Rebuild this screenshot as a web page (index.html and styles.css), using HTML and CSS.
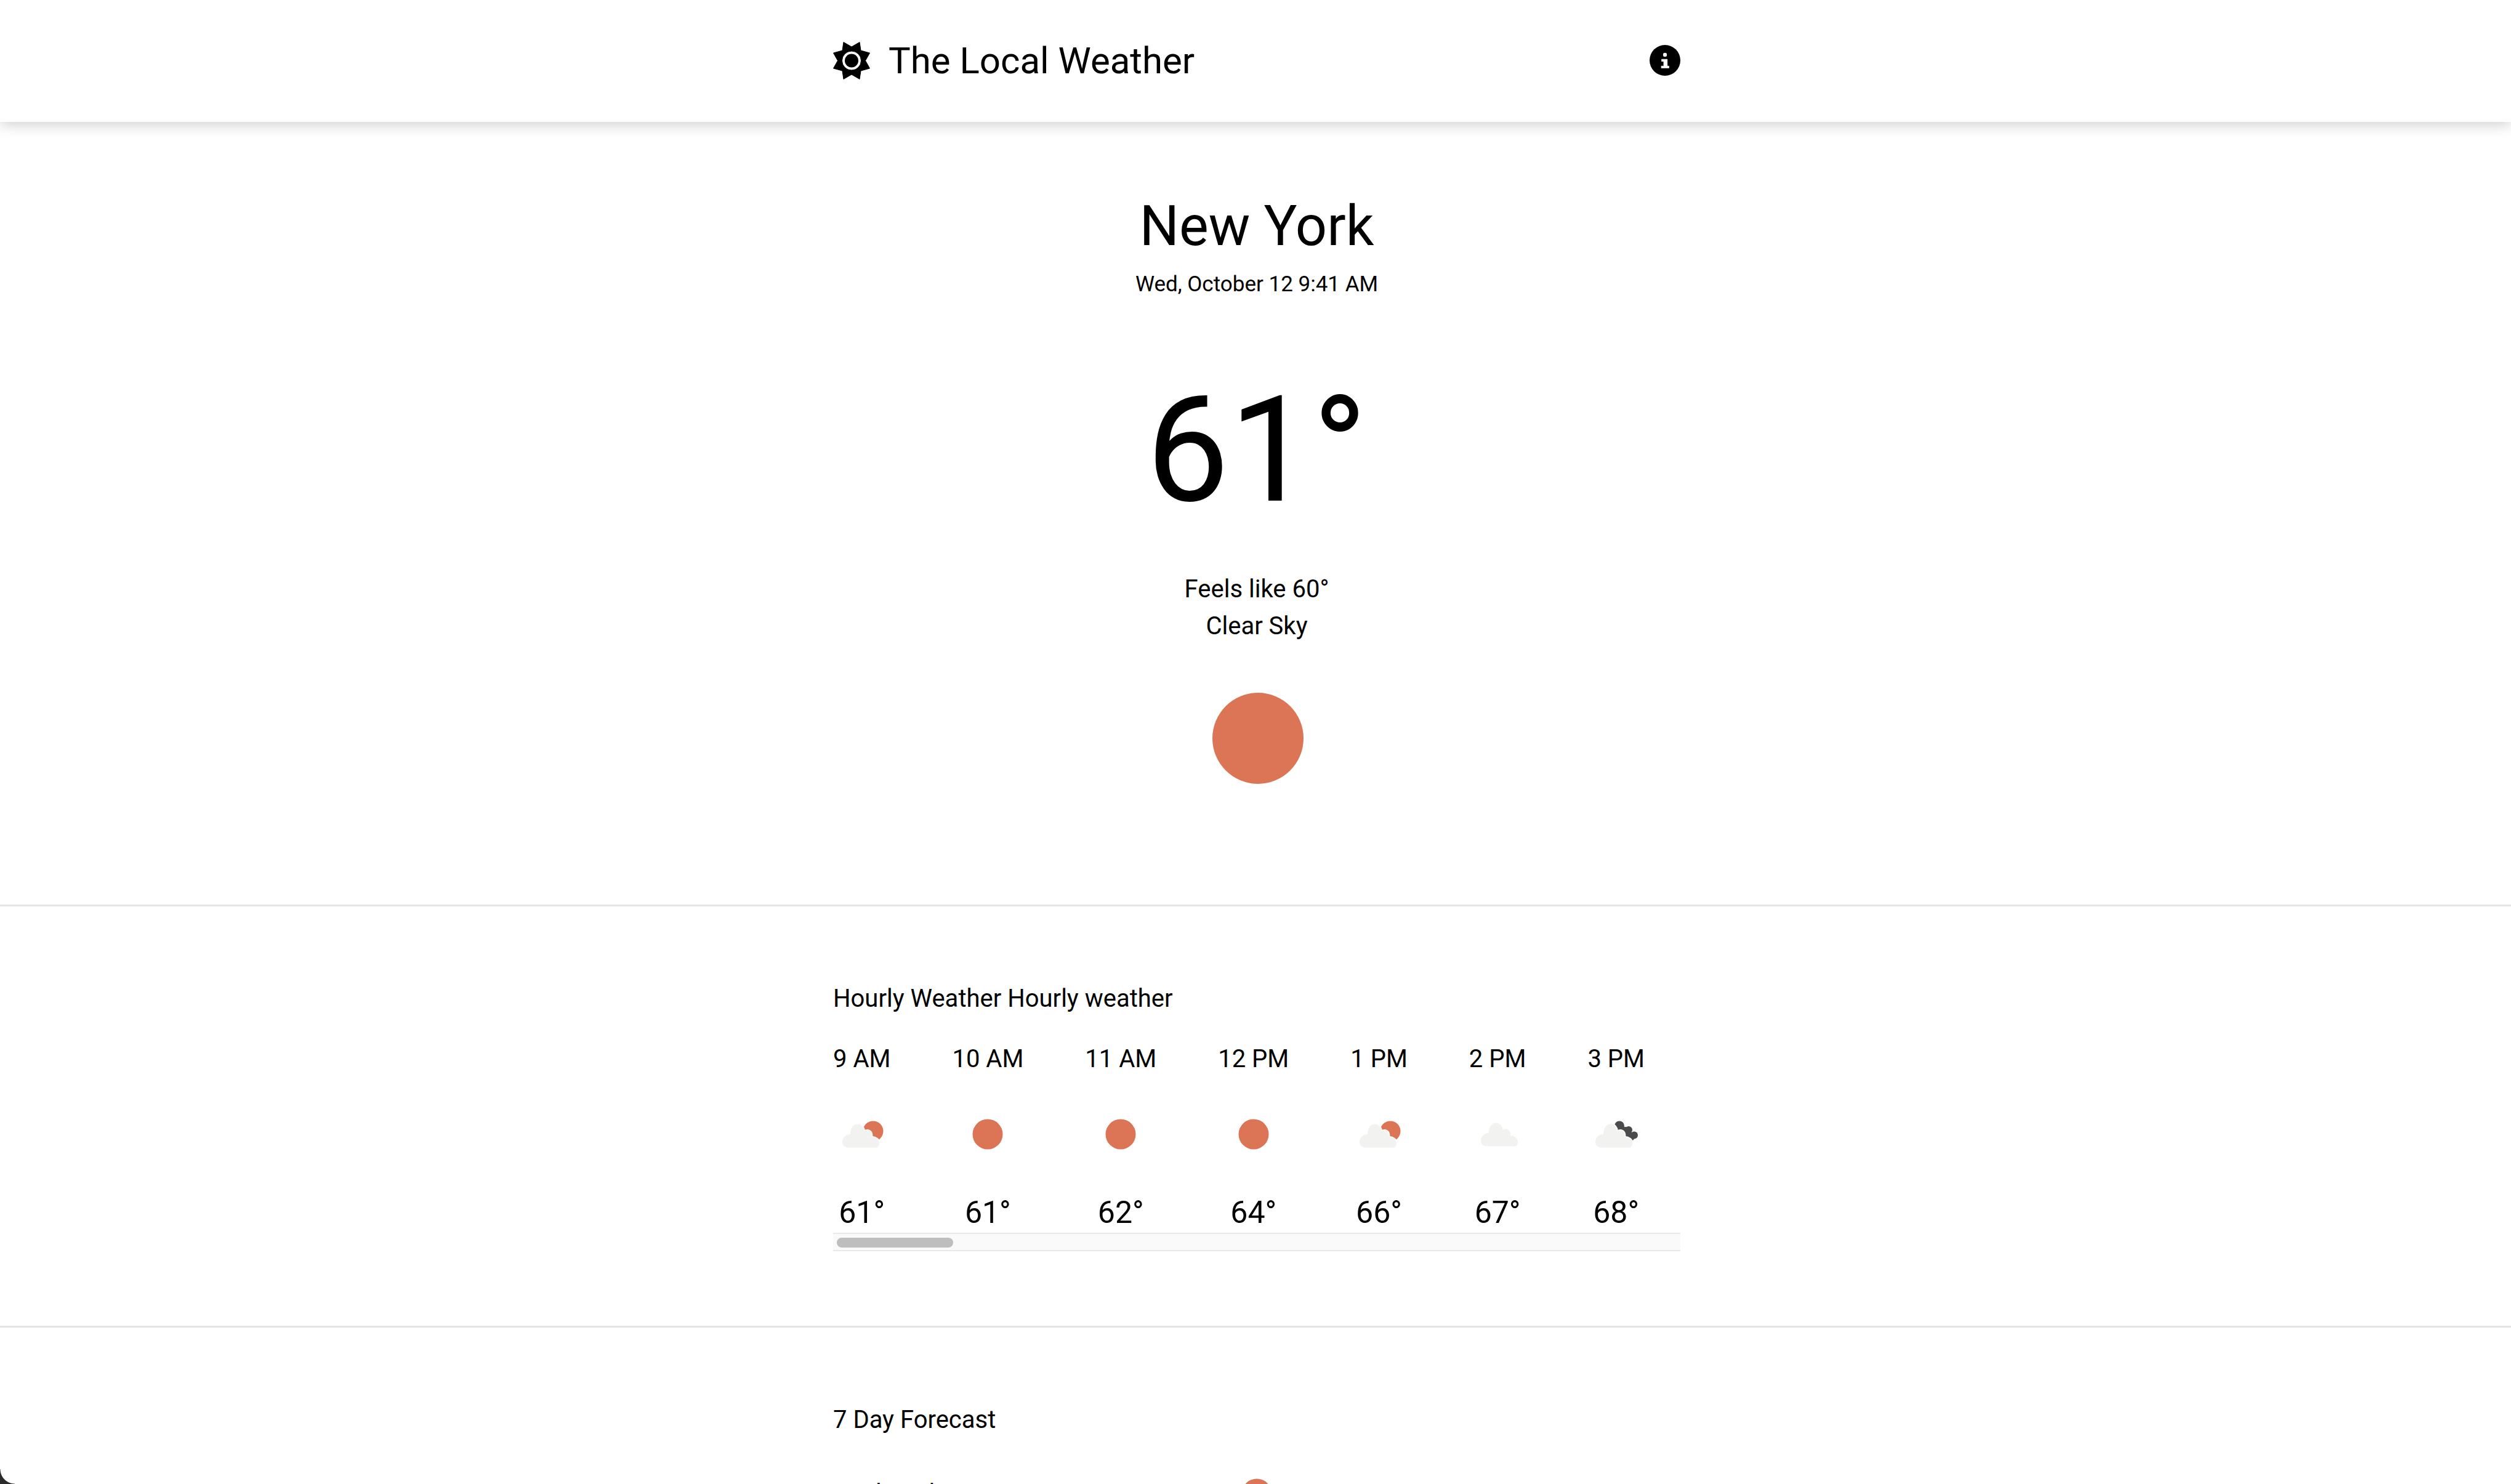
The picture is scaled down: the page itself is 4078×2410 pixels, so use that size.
FILE: index.html
```html
<!DOCTYPE html>
<html>
<head>
<meta name="viewport" content="width=device-width, initial-scale=1">
<title>The Local Weather</title>
<link rel="stylesheet" href="styles.css">
</head>
<body>

<header class="top-bar">
  <div class="wrap top-bar-inner">
    <div class="brand">
      <svg class="brand-icon" viewBox="0 0 60 61">
        <path fill-rule="evenodd" fill="#000" stroke="#000" stroke-linejoin="round" d="M17 .5 L30 8 L43 .5 L45 14 L59.5 18 L52.5 30.5 L59.5 43 L45 47 L43 60.5 L30 53 L17 60.5 L15 47 L.5 43 L7.5 30.5 L.5 18 L15 14 Z M30 15 A15.5 15.5 0 1 0 30 46 A15.5 15.5 0 1 0 30 15 Z"/>
        <circle cx="30" cy="30.5" r="11" fill="#000"/>
      </svg>
      <span class="brand-name">The Local Weather</span>
    </div>
    <svg class="info-icon" viewBox="0 0 50 50">
      <circle cx="25" cy="25" r="25" fill="#000"/>
      <circle cx="25" cy="16" r="3.2" fill="#fff"/>
      <path fill="#fff" stroke="#fff" stroke-width=".6" stroke-linejoin="round" d="M19.5 23.2 H28.8 V34.2 H31.5 V37.5 H19 V34.2 H22.9 V26.8 H19.5 Z"/>
    </svg>
  </div>
</header>

<section class="current">
  <h1 class="city">New York</h1>
  <p class="date">Wed, October 12 9:41 AM</p>
  <p class="temp-now">61°</p>
  <p class="summary">Feels like 60°<br>Clear Sky</p>
  <svg class="sun-big" viewBox="0 0 100 100"><circle cx="50" cy="50" r="50" fill="#dc7555"/></svg>
</section>

<section class="band">
  <div class="wrap">
    <h2 class="band-title">Hourly Weather Hourly weather</h2>
    <div class="hours">
      <div class="hour"><span class="hour-time">9 AM</span>
        <svg class="wx" viewBox="0 0 72 72"><use href="#partly"/></svg>
        <span class="hour-temp">61°</span></div>
      <div class="hour"><span class="hour-time">10 AM</span>
        <svg class="wx" viewBox="0 0 72 72"><use href="#clear"/></svg>
        <span class="hour-temp">61°</span></div>
      <div class="hour"><span class="hour-time">11 AM</span>
        <svg class="wx" viewBox="0 0 72 72"><use href="#clear"/></svg>
        <span class="hour-temp">62°</span></div>
      <div class="hour"><span class="hour-time">12 PM</span>
        <svg class="wx" viewBox="0 0 72 72"><use href="#clear"/></svg>
        <span class="hour-temp">64°</span></div>
      <div class="hour"><span class="hour-time">1 PM</span>
        <svg class="wx" viewBox="0 0 72 72"><use href="#partly"/></svg>
        <span class="hour-temp">66°</span></div>
      <div class="hour"><span class="hour-time">2 PM</span>
        <svg class="wx" viewBox="0 0 72 72"><use href="#cloud"/></svg>
        <span class="hour-temp">67°</span></div>
      <div class="hour"><span class="hour-time">3 PM</span>
        <svg class="wx" viewBox="0 0 72 72"><use href="#overcast"/></svg>
        <span class="hour-temp">68°</span></div>
    </div>
    <div class="scroll-track"><div class="scroll-thumb"></div></div>
  </div>
</section>

<section class="band band-last">
  <div class="wrap">
    <h2 class="band-title">7 Day Forecast</h2>
    <div class="day">
      <span class="day-name">Wednesday</span>
      <svg class="wx-day" viewBox="0 0 72 72"><use href="#clear"/></svg>
    </div>
  </div>
</section>

<div class="corner"></div>

<svg class="defs" width="0" height="0">
  <defs>
    <g id="clear"><circle cx="36" cy="36" r="24.5" fill="#dc7555"/></g>
    <path id="cloud-shape" d="M7 38 A9 9 0 0 1 0 29 A12.5 12.5 0 0 1 13 16.5 C13 6 18 0 25 0 C31 0 35 5 36 12 C38 9 44 9 47 14 C48 16 48 18 48 21 C54 21 60 25 60 31 C60 34 59 36 57 38 Z"/>
    <g id="partly">
      <circle cx="54" cy="31" r="16.5" fill="#dc7555"/>
      <use href="#cloud-shape" transform="translate(4 19.5)" fill="#fff" stroke="#fff" stroke-width="3"/>
      <use href="#cloud-shape" transform="translate(4 19.5)" fill="#f2f2f0"/>
    </g>
    <g id="cloud"><use href="#cloud-shape" transform="translate(9 17.5)" fill="#f2f2f0"/></g>
    <g id="overcast" fill="#4b4b4d">
      <circle cx="41" cy="22.5" r="8"/>
      <circle cx="56" cy="29" r="6"/>
      <circle cx="65" cy="37.5" r="6"/>
      <circle cx="50" cy="35" r="11"/>
      <circle cx="60" cy="41" r="5.5"/>
      <use href="#cloud-shape" transform="translate(2 19.5)" fill="#fff" stroke="#fff" stroke-width="3"/>
      <use href="#cloud-shape" transform="translate(2 19.5)" fill="#f2f2f0"/>
    </g>
  </defs>
</svg>

</body>
</html>
```

FILE: styles.css
```css
* {
  box-sizing: border-box;
}

html, body {
  height: 2410px;
  margin: 0;
  overflow: hidden;
  background: #fff;
}

body {
  position: relative;
  font-family: Roboto, "Liberation Sans", sans-serif;
  color: #000;
}

.wrap {
  width: 1376px;
  margin-left: 1353px;
}

/* top bar */
.top-bar {
  height: 198px;
  background: #fff;
  box-shadow: 0 4px 22px rgba(0, 0, 0, 0.2);
  position: relative;
}

.top-bar-inner {
  height: 100%;
  padding-bottom: 2px;
  display: flex;
  align-items: center;
  justify-content: space-between;
}

.brand {
  display: flex;
  align-items: center;
  gap: 30px;
}

.brand-icon {
  width: 60px;
  height: 61px;
}

.brand-name {
  font-size: 60px;
}

.info-icon {
  width: 50px;
  height: 50px;
}

/* current conditions */
.current {
  height: 1271px;
  padding-top: 115px;
  padding-left: 4px;
  display: flex;
  flex-direction: column;
  align-items: center;
}

.city {
  margin: 0;
  font-size: 90px;
  font-weight: 400;
  line-height: 110px;
}

.date {
  margin: 18px 0 0;
  font-size: 35px;
  line-height: 42px;
}

.temp-now {
  margin: 101px 0 0;
  font-size: 240px;
  font-weight: 400;
  line-height: 294px;
}

.summary {
  margin: 49px 0 0;
  font-size: 40px;
  line-height: 60px;
  text-align: center;
}

.sun-big {
  width: 148px;
  height: 148px;
  margin-top: 78px;
  margin-left: 3px;
}

/* hourly + daily bands */
.band {
  border-top: 3px solid #e4e4e4;
  height: 684px;
  padding-top: 126px;
}

.band-last {
  height: 257px;
  overflow: hidden;
}

.band-title {
  margin: 0;
  font-size: 40px;
  font-weight: 400;
  line-height: 48px;
}

.hours {
  display: flex;
  gap: 100px;
  margin-top: 50px;
}

.hour {
  display: flex;
  flex-direction: column;
  align-items: center;
}

.hour-time {
  font-size: 40px;
  line-height: 48px;
}

.wx {
  width: 72px;
  height: 72px;
  margin-top: 62px;
}

.hour-temp {
  margin-top: 61px;
  font-size: 50px;
  line-height: 60px;
}

.scroll-track {
  height: 30px;
  margin-top: 3px;
  padding: 6px 6px;
  background: #fafafa;
  border-top: 2px solid #e8e8e8;
  border-bottom: 2px solid #e8e8e8;
}

.scroll-thumb {
  width: 189px;
  height: 16px;
  border-radius: 8px;
  background: #bebebe;
}

.day {
  display: grid;
  grid-template-columns: 1fr 72px 1fr;
  align-items: center;
  margin-top: 60px;
  font-size: 40px;
  line-height: 48px;
}

.wx-day {
  width: 72px;
  height: 72px;
}

.corner {
  position: absolute;
  left: 0;
  bottom: 0;
  width: 24px;
  height: 24px;
  background: radial-gradient(circle at 100% 0, transparent 23px, #2b2b2b 24px);
}

.defs {
  position: absolute;
}
```
